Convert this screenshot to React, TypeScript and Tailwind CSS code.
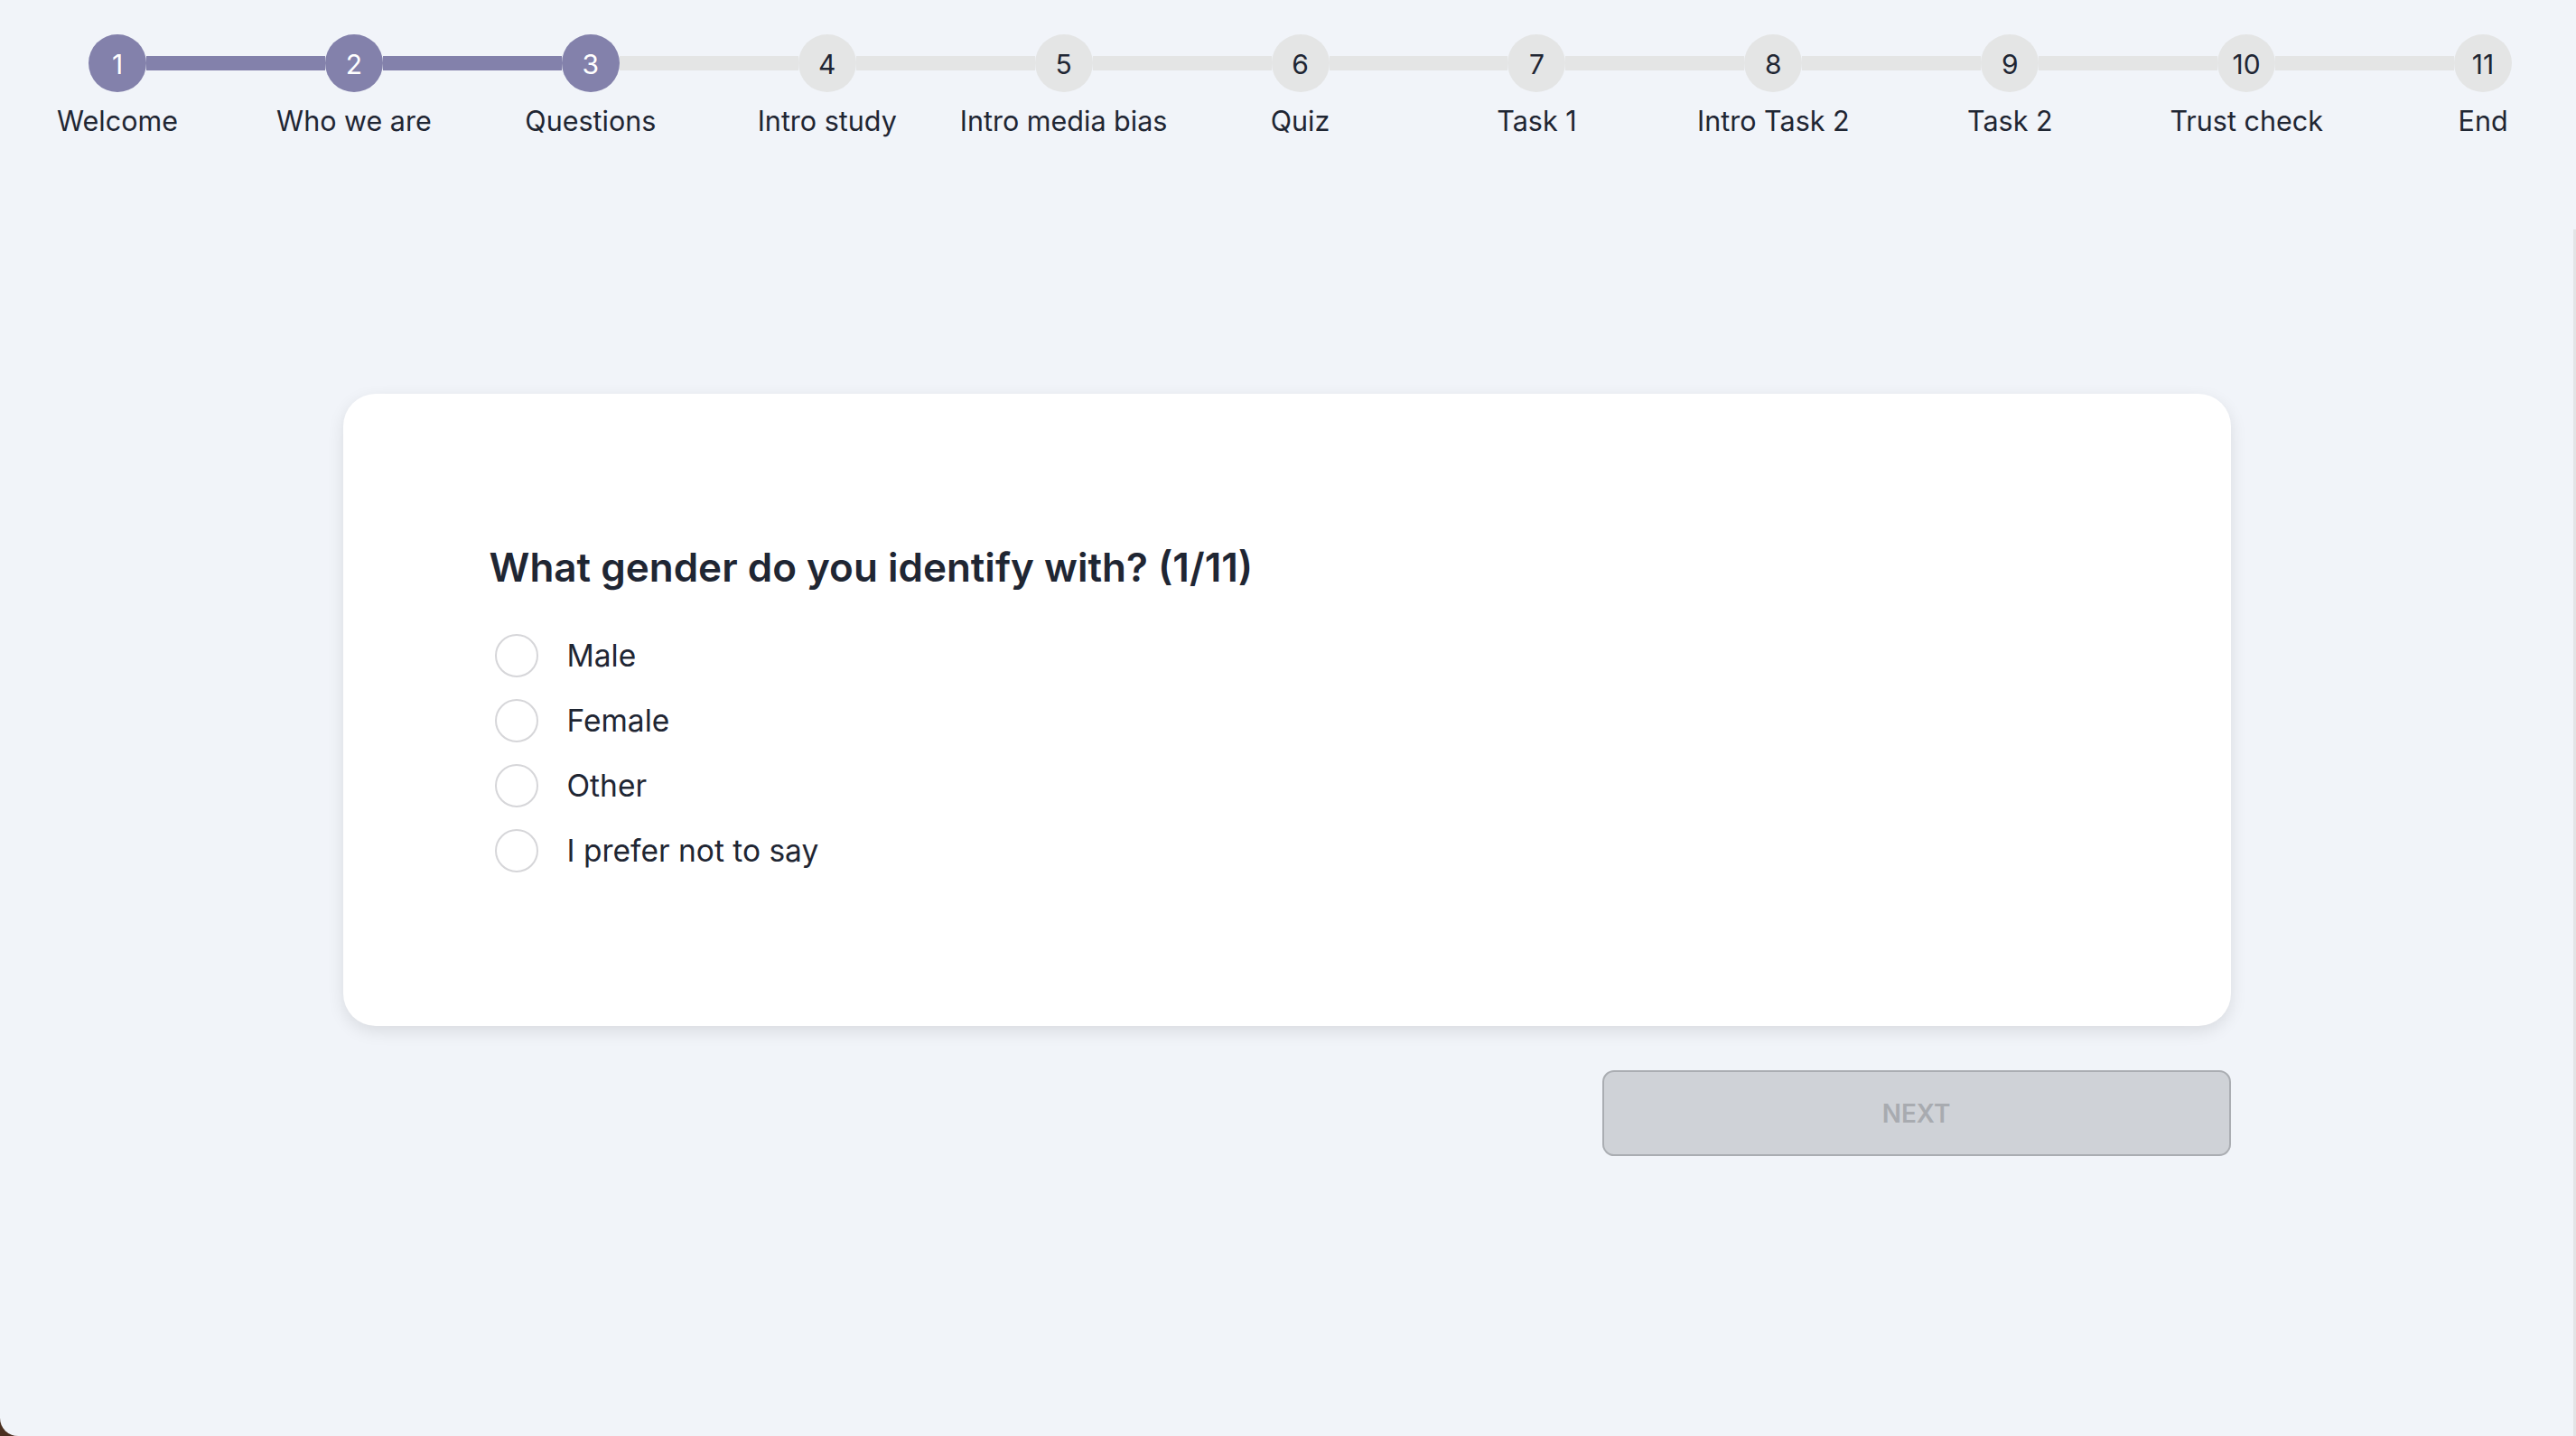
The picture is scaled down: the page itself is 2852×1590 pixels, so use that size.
import React from 'react';

const steps = [
  'Welcome',
  'Who we are',
  'Questions',
  'Intro study',
  'Intro media bias',
  'Quiz',
  'Task 1',
  'Intro Task 2',
  'Task 2',
  'Trust check',
  'End',
];

const options = ['Male', 'Female', 'Other', 'I prefer not to say'];

const activeStep = 3;

function Stepper() {
  return (
    <div className="flex items-start pt-[38px] pl-[98px] pr-[68px]">
      {steps.map((label, i) => {
        const n = i + 1;
        const done = n <= activeStep;
        return (
          <React.Fragment key={label}>
            {i > 0 && (
              <div
                className={
                  n <= activeStep
                    ? 'flex-1 h-[16px] mt-[24px] bg-[#8381ab]'
                    : 'flex-1 h-[16px] mt-[24px] bg-[#e4e5e5]'
                }
              />
            )}
            <div className="w-[64px] flex flex-col items-center">
              <div
                className={
                  done
                    ? 'w-[64px] h-[64px] pt-[2px] rounded-full flex items-center justify-center bg-[#8381ab] text-white text-[30px]'
                    : 'w-[64px] h-[64px] pt-[2px] rounded-full flex items-center justify-center bg-[#e4e5e5] text-[#1f2633] text-[30px]'
                }
              >
                {n}
              </div>
              <div className="mt-[9px] text-[30.5px] leading-[45px] whitespace-nowrap text-[#1f2633]">
                {label}
              </div>
            </div>
          </React.Fragment>
        );
      })}
    </div>
  );
}

function Question() {
  return (
    <div className="w-[2090px] mx-auto mt-[280px]">
      <div className="bg-white rounded-[36px] shadow-[0_6px_18px_rgba(0,0,0,0.10)] pl-[162px] pr-[160px] pt-[166px] pb-[158px]">
        <h2 className="text-[44px] leading-[53px] font-semibold text-[#1f2633]">
          What gender do you identify with? (1/11)
        </h2>
        <div className="mt-[35px] flex flex-col">
          {options.map((opt) => (
            <label key={opt} className="h-[72px] flex items-center gap-[32px] cursor-pointer">
              <span className="ml-[6px] w-[48px] h-[48px] rounded-full border-2 border-[#d6d6d9] bg-white" />
              <span className="text-[33.5px] text-[#1f2633]">{opt}</span>
            </label>
          ))}
        </div>
      </div>
      <div className="flex justify-end mt-[49px]">
        <button
          type="button"
          disabled
          className="w-[696px] h-[95px] rounded-[13px] border-2 border-[#aaadb2] bg-[#cfd2d7] text-[#a8abb0] text-[28px] font-semibold uppercase"
        >
          Next
        </button>
      </div>
    </div>
  );
}

export default function App() {
  return (
    <div className="bg-[#4a2f20] font-['Inter',sans-serif]">
      <div className="h-[1590px] flex bg-[#f1f4f9] rounded-bl-[20px] overflow-hidden">
        <main className="flex-1 flex flex-col">
          <Stepper />
          <Question />
        </main>
        <div className="w-[3px] pt-[254px] flex flex-col">
          <div className="flex-1 bg-[#e3e4e6]" />
        </div>
      </div>
    </div>
  );
}
